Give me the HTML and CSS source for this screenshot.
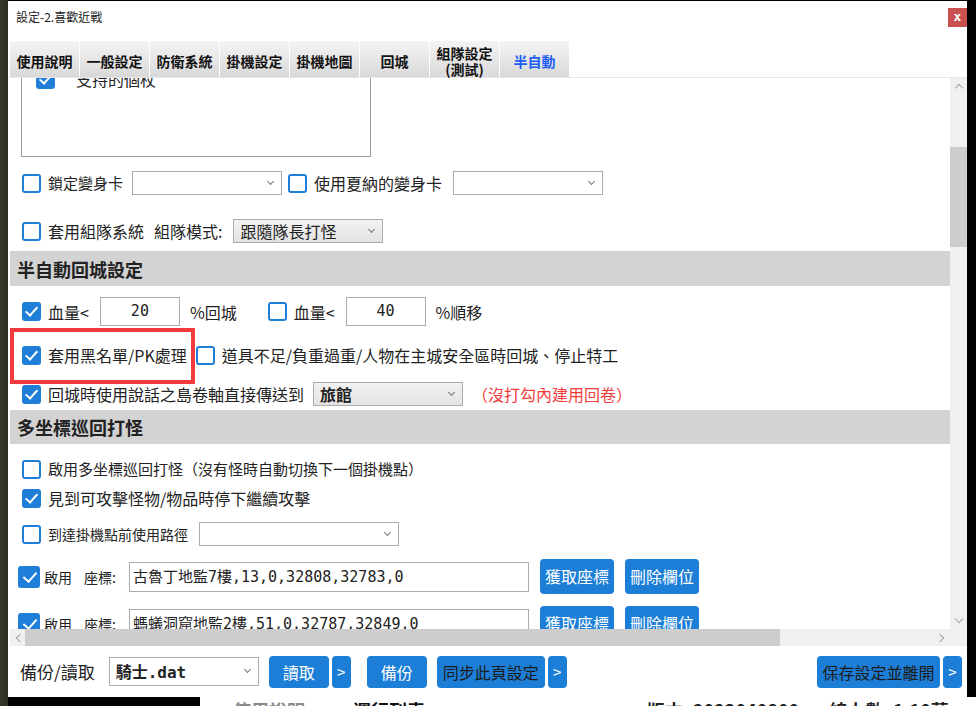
FILE: index.html
```html
<!DOCTYPE html>
<html lang="zh-Hant">

<head>
    <meta charset="UTF-8">
    <title>設定-2.喜歡近戰</title>
    <link rel="stylesheet" href="styles.css">
</head>

<body>
    <div class="dialog">
        <div class="titlebar">
            <span class="title">設定-2.喜歡近戰</span>
            <span class="close">x</span>
        </div>

        <div class="tabs">
            <div class="tab">使用說明</div>
            <div class="tab">一般設定</div>
            <div class="tab">防衛系統</div>
            <div class="tab">掛機設定</div>
            <div class="tab">掛機地圖</div>
            <div class="tab">回城</div>
            <div class="tab">組隊設定<br>(測試)</div>
            <div class="tab active">半自動</div>
        </div>

        <div class="pane">
            <div class="view">
                <div class="inner">
                    <div class="listbox">
                        <div class="list-item"><span class="cb on"></span>支持的個杖</div>
                    </div>

                    <div class="row r-morph">
                        <span class="cb"></span><span class="narrow">鎖定變身卡</span>
                        <span class="select w150 first"></span>
                        <span class="cb gap"></span><span>使用夏納的變身卡</span>
                        <span class="select w150"></span>
                    </div>

                    <div class="row r-party">
                        <span class="cb"></span><span>套用組隊系統</span>
                        <span class="label-mode">組隊模式:</span>
                        <span class="select w150 grey">跟隨隊長打怪</span>
                    </div>

                    <div class="section">半自動回城設定</div>

                    <div class="row r-hp">
                        <span class="cb on"></span><span>血量&lt;</span>
                        <span class="num">20</span>
                        <span class="after-num">%回城</span>
                        <span class="cb off-gap"></span><span>血量&lt;</span>
                        <span class="num">40</span>
                        <span class="after-num">%順移</span>
                    </div>

                    <div class="row r-black">
                        <span class="cb on"></span><span>套用黑名單/PK處理</span>
                        <span class="cb tight"></span><span>道具不足/負重過重/人物在主城安全區時回城、停止特工</span>
                        <span class="mark"></span>
                    </div>

                    <div class="row r-scroll">
                        <span class="cb on"></span><span>回城時使用說話之島卷軸直接傳送到</span>
                        <span class="select w150 grey bold">旅館</span>
                        <span class="warn"><span class="paren">（</span>沒打勾內建用回卷<span class="paren">）</span></span>
                    </div>

                    <div class="section s2">多坐標巡回打怪</div>

                    <div class="row r-multi">
                        <span class="cb"></span><span class="narrow">啟用多坐標巡回打怪<span class="paren">（</span>沒有怪時自動切換下一個掛機點<span class="paren">）</span></span>
                    </div>

                    <div class="row r-stop">
                        <span class="cb on"></span><span>見到可攻擊怪物/物品時停下繼續攻擊</span>
                    </div>

                    <div class="row r-path">
                        <span class="cb"></span><span class="small">到達掛機點前使用路徑</span>
                        <span class="select w200"></span>
                    </div>

                    <div class="row coord">
                        <span class="cb big on"></span><span class="small">啟用</span>
                        <span class="small coord-label">座標:</span>
                        <span class="coord-input">古魯丁地監7樓,13,0,32808,32783,0</span>
                        <span class="btn">獲取座標</span>
                        <span class="btn">刪除欄位</span>
                    </div>

                    <div class="row coord">
                        <span class="cb big on"></span><span class="small">啟用</span>
                        <span class="small coord-label">座標:</span>
                        <span class="coord-input">螞蟻洞窟地監2樓,51,0,32787,32849,0</span>
                        <span class="btn">獲取座標</span>
                        <span class="btn">刪除欄位</span>
                    </div>
                </div>
            </div>

            <!-- scrollbars of the settings pane -->
            <div class="vbar">
                <span class="arrow up"></span>
                <span class="vthumb"></span>
                <span class="arrow down"></span>
            </div>
            <div class="hbar">
                <span class="arrow left"></span>
                <span class="hthumb"></span>
                <span class="arrow right"></span>
            </div>
            <div class="corner"></div>
        </div>

        <div class="footer">
            <span class="backup-label">備份/讀取</span>
            <span class="select file">騎士<b>.dat</b></span>
            <span class="btn big w60">讀取</span>
            <span class="btn more">&gt;</span>
            <span class="btn big w60 spaced">備份</span>
            <span class="btn big dark sync">同步此頁設定</span>
            <span class="btn more">&gt;</span>
            <span class="btn big dark save">保存設定並離開</span>
            <span class="btn more">&gt;</span>
        </div>
    </div>

    <div class="under">
        <span class="u-tab">使用說明</span>
        <span class="u-tab on">運行列表</span>
        <span class="u-info">版本: 2023040800</span>
        <span class="u-info">線上數: 1.10萬</span>
    </div>
</body>

</html>
```

FILE: styles.css
```css
/* Page behind the dialog */
body {
    margin: 0;
    width: 976px;
    height: 706px;
    overflow: hidden;
    background: linear-gradient(to right, #34372a 0, #2a3021 8px, #000 8px);
    font-family: "Noto Sans CJK TC", "Noto Sans", sans-serif;
    color: #222;
}

/* Settings dialog */
.dialog {
    margin: 1px 0 0 8px;
    width: 959px;
    height: 696px;
    background: #fff;
    display: flex;
    flex-direction: column;
}

.titlebar {
    height: 40px;
    display: flex;
    align-items: flex-start;
}

.title {
    margin: 8px 0 0 8px;
    font-size: 12px;
    line-height: 16px;
}

.close {
    margin: 7px 0 0 auto;
    width: 19px;
    height: 19px;
    background: #c9504f;
    color: #fff;
    font: bold 13px/18px "DejaVu Sans Mono", monospace;
    text-align: center;
}

/* Tab strip */
.tabs {
    display: flex;
    gap: 1px;
    padding-left: 2px;
    height: 36px;
    border-bottom: 1px solid #e6e6e6;
}

.tab {
    width: 69px;
    display: flex;
    align-items: center;
    justify-content: center;
    padding-top: 3px;
    box-sizing: border-box;
    text-align: center;
    background: linear-gradient(#f4f4f4, #d9d9d9);
    font-size: 14px;
    font-weight: bold;
    line-height: 16px;
    color: #111;
}

.tab.active {
    color: #1d5ef2;
}

/* Scrolling pane */
.pane {
    display: grid;
    grid-template-columns: 940px 17px;
    grid-template-rows: 551px 17px;
    margin-left: 2px;
}

.view {
    overflow: hidden;
}

.inner {
    margin-top: -21px;
    font-size: 16px;
    line-height: 20px;
}

.listbox {
    margin-left: 11px;
    width: 350px;
    height: 100px;
    box-sizing: border-box;
    border: 1px solid #9a9a9a;
}

.list-item {
    display: flex;
    align-items: center;
    gap: 14px;
    margin: 11px 0 0 14px;
}

.row {
    display: flex;
    align-items: center;
    padding-left: 12px;
    white-space: nowrap;
}

.narrow {
    font-size: 15px;
}

/* full-width brackets, centred in one em */
.paren {
    display: inline-block;
    width: 1em;
    text-align: center;
}

/* Checkboxes */
.cb {
    flex: none;
    position: relative;
    width: 19px;
    height: 19px;
    box-sizing: border-box;
    border: 2px solid #1f7fd8;
    border-radius: 3px;
    margin-right: 7px;
    background: #fff;
}

.cb.on {
    background: #1f7fd8;
}

.cb.on::after {
    content: "";
    position: absolute;
    left: 4px;
    top: 0;
    width: 5px;
    height: 10px;
    border: solid #fff;
    border-width: 0 2.5px 2.5px 0;
    transform: rotate(42deg);
}

.cb.off-gap {
    margin-left: 31px;
}

.cb.gap {
    margin-left: 6px;
}

.cb.tight {
    margin-left: 9px;
}

.cb.big {
    width: 22px;
    height: 22px;
    margin-right: 4px;
}

.cb.big::after {
    left: 6px;
    top: 1px;
    width: 6px;
    height: 11px;
}

/* Drop-down boxes */
.select {
    position: relative;
    flex: none;
    height: 24px;
    box-sizing: border-box;
    border: 1px solid #ababab;
    background: #fff;
    margin-left: 11px;
    padding-left: 6px;
    font-size: 16px;
    line-height: 22px;
}

.select::after {
    content: "";
    position: absolute;
    right: 8px;
    top: 7px;
    width: 4px;
    height: 4px;
    border: solid #777;
    border-width: 0 1px 1px 0;
    transform: rotate(45deg);
}

.select.first {
    margin-left: 9px;
}

.select.grey {
    background: linear-gradient(#f2f2f2, #e3e3e3);
}

.select.bold {
    font-weight: bold;
}

.w150 {
    width: 150px;
}

.w200 {
    width: 200px;
}

.label-mode {
    margin-left: 10px;
}

/* Section headings */
.section {
    margin-top: 8px;
    height: 35px;
    display: flex;
    align-items: center;
    padding-left: 7px;
    background: #d3d3d3;
    font-size: 18px;
    font-weight: bold;
}

.section.s2 {
    margin-top: 4px;
    height: 34px;
}

.r-morph {
    margin-top: 14px;
    height: 24px;
}

.r-party {
    margin-top: 24px;
    height: 24px;
}

.r-hp {
    margin-top: 11px;
    height: 29px;
}

.num {
    width: 80px;
    height: 29px;
    box-sizing: border-box;
    border: 1px solid #ababab;
    margin-left: 11px;
    text-align: center;
    font: 15px/27px "DejaVu Sans Mono", monospace;
}

.after-num {
    margin-left: 10px;
}

.r-black {
    position: relative;
    margin-top: 2px;
    height: 54px;
}

/* red outline round the blacklist option */
.mark {
    position: absolute;
    left: 0;
    top: 0;
    width: 185px;
    height: 56px;
    box-sizing: border-box;
    border: 4px solid #f23a3f;
}

.r-scroll {
    height: 24px;
}

.r-scroll .select {
    margin-left: 9px;
}

.warn {
    margin-left: 9px;
    color: #f43b3b;
}

.r-multi {
    margin-top: 15px;
    height: 20px;
}

.r-stop {
    margin-top: 9px;
    height: 20px;
}

.r-path {
    margin-top: 14px;
    height: 24px;
}

.small {
    font-size: 14px;
}

.coord {
    margin-top: 13px;
    height: 35px;
    padding-left: 8px;
}

.coord + .coord {
    margin-top: 12px;
}

.coord-label {
    margin-left: 12px;
}

.coord-input {
    width: 400px;
    height: 30px;
    box-sizing: border-box;
    border: 1px solid #ababab;
    margin-left: 13px;
    padding-left: 3px;
    font: 15px/28px "DejaVu Sans Mono", "Noto Sans CJK TC", monospace;
}

/* Blue buttons */
.btn {
    flex: none;
    height: 35px;
    padding: 0 5px;
    margin-left: 11px;
    border-radius: 4px;
    background: #1c7ed6;
    color: #fff;
    font-size: 16px;
    line-height: 35px;
    text-align: center;
}

/* Scrollbars */
.vbar {
    position: relative;
    background: #f0f0f0;
}

.vthumb {
    position: absolute;
    left: 0;
    top: 69px;
    width: 17px;
    height: 100px;
    background: #cdcdcd;
}

.hbar {
    position: relative;
    background: #f0f0f0;
}

.hthumb {
    position: absolute;
    left: 15px;
    top: 0;
    width: 755px;
    height: 17px;
    background: #cdcdcd;
}

.corner {
    background: #f0f0f0;
}

.arrow {
    position: absolute;
    width: 5px;
    height: 5px;
    border: solid #a3a3a3;
    border-width: 1px 0 0 1px;
}

.arrow.up {
    left: 6px;
    top: 7px;
    transform: rotate(45deg);
}

.arrow.down {
    left: 6px;
    bottom: 7px;
    transform: rotate(225deg);
}

.arrow.left {
    left: 7px;
    top: 6px;
    transform: rotate(-45deg);
}

.arrow.right {
    right: 7px;
    top: 6px;
    transform: rotate(135deg);
}

/* Bottom bar */
.footer {
    flex: 1;
    display: flex;
    align-items: center;
    padding: 0 5px 0 12px;
}

.backup-label {
    font-size: 17px;
}

.select.file {
    width: 150px;
    height: 29px;
    margin-left: 14px;
    font-size: 16px;
    line-height: 26px;
    font-weight: bold;
}

.select.file::after {
    top: 9px;
}

.select.file b {
    font-family: "DejaVu Sans Mono", monospace;
}

.footer .btn {
    height: 32px;
    line-height: 32px;
    margin-left: 10px;
}

.footer .btn.w60 {
    width: 60px;
    padding: 0;
}

.footer .btn.more {
    width: 19px;
    padding: 0;
    margin-left: 3px;
    font-size: 15px;
}

.footer .btn.spaced {
    margin-left: 16px;
}

.footer .btn.dark {
    color: #1b1b1b;
}

.footer .btn.sync {
    width: 108px;
    padding: 0;
}

.footer .btn.save {
    margin-left: auto;
    width: 123px;
    padding: 0;
}

/* Strip of the main window below the dialog */
.under {
    display: flex;
    height: 9px;
    margin-left: 200px;
    overflow: hidden;
    background: #fff;
    font-size: 18px;
    font-weight: bold;
    line-height: 22px;
    white-space: nowrap;
}

.u-tab {
    margin: 2px 0 0 33px;
    color: #8a8a8a;
}

.u-tab.on {
    margin-left: 48px;
    color: #111;
}

.u-info {
    margin: 2px 0 0 222px;
    color: #222;
}

.u-info + .u-info {
    margin-left: 30px;
}
```
